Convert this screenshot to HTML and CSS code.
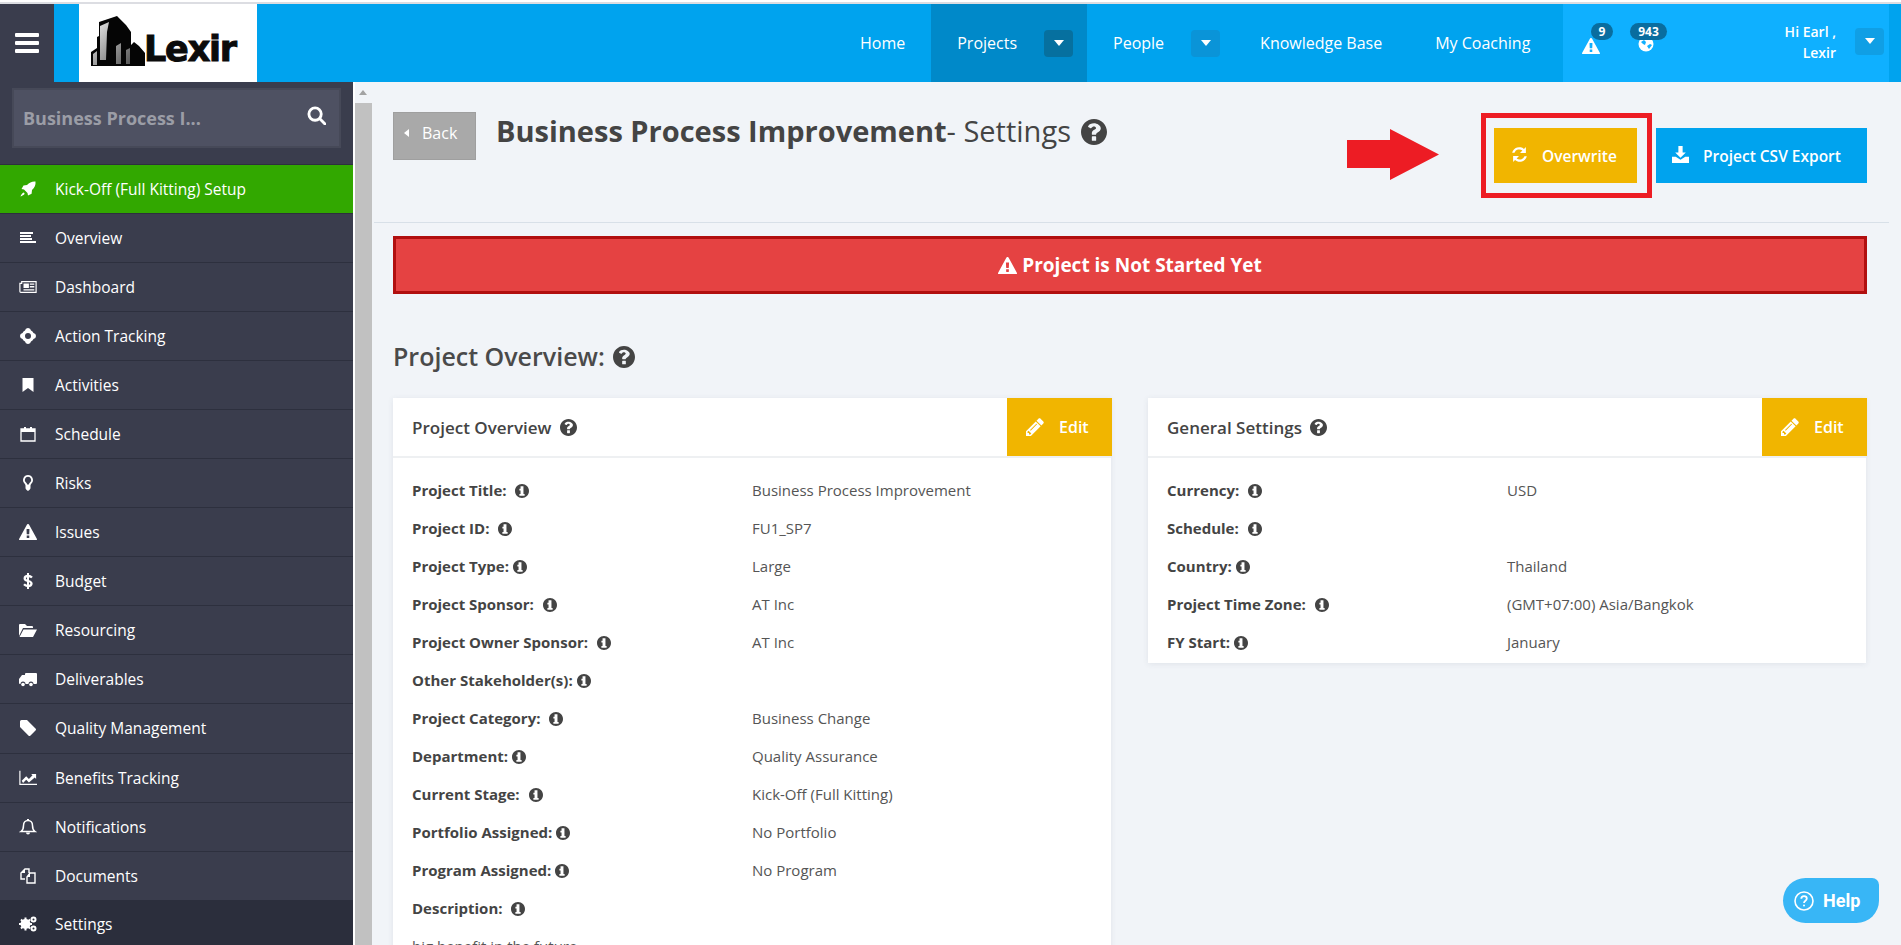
FILE: index.html
```html
<!DOCTYPE html>
<html lang="en">
<head>
<meta charset="utf-8">
<title>Business Process Improvement - Settings</title>
<link rel="stylesheet" href="styles.css">
</head>
<body>
<svg class="defs" width="0" height="0" aria-hidden="true">
  <defs>
    <symbol id="i-q" viewBox="0 0 1536 1536"><path d="M768 0C344 0 0 344 0 768s344 768 768 768 768-344 768-768S1192 0 768 0zm128 1248c0 18-14 32-32 32H672c-18 0-32-14-32-32v-192c0-18 14-32 32-32h192c18 0 32 14 32 32v192zm243-600c-20 56-75 103-135 138-57 34-92 64-108 94v16c0 18-14 32-32 32H672c-18 0-32-14-32-32v-64c0-84 72-148 148-192 66-38 100-66 100-108 0-56-62-96-124-96-70 0-104 32-158 100-11 14-31 17-45 6L429 468c-14-10-17-29-8-43C494 309 598 256 768 256c178 0 400 138 400 288 0 36-10 70-29 104z"/></symbol>
    <symbol id="i-i" viewBox="0 0 1536 1536"><path d="M768 0C344 0 0 344 0 768s344 768 768 768 768-344 768-768S1192 0 768 0zm-128 256h256c18 0 32 14 32 32v192c0 18-14 32-32 32H640c-18 0-32-14-32-32V288c0-18 14-32 32-32zm384 1024H512c-18 0-32-14-32-32v-128c0-18 14-32 32-32h96V704h-96c-18 0-32-14-32-32V544c0-18 14-32 32-32h384c18 0 32 14 32 32v544h96c18 0 32 14 32 32v128c0 18-14 32-32 32z"/></symbol>
    <symbol id="i-pencil" viewBox="0 0 1536 1536"><path d="M363 1408l91-91-235-235-91 91v107h128v128h107zM886 480L344 1022l58 58L944 538zM832 288l416 416-832 832H0v-416L832 288zm683 96c0 34-12 63-37 90l-166 166-416-416L1062 58c25-26 55-37 90-37s64 12 90 37l235 234c25 27 38 57 38 92z"/></symbol>
    <symbol id="i-warn" viewBox="0 0 1792 1600"><path d="M1024 1375v-190c0-9-3-17-9-23s-14-10-23-10H800c-9 0-17 4-23 10s-9 14-9 23v190c0 9 3 17 9 23s14 10 23 10h192c9 0 17-4 23-10s9-14 9-23zm-2-374l18-459c0-8-3-14-10-19-9-7-17-11-25-11H785c-8 0-16 4-25 11-7 5-10 12-10 21l17 457c0 7 3 12 10 17s15 7 24 7h185c9 0 17-2 23-7s10-10 11-17zM1008 67l768 1408c23 42 23 84-2 126-11 19-27 35-47 46s-41 17-63 17H128c-22 0-43-6-63-17s-36-27-47-46c-25-42-25-84-2-126L784 67c11-21 27-37 47-49s42-18 65-18 44 6 65 18 36 28 47 49z"/></symbol>
  </defs>
</svg>

<div class="app">
  <div class="topline"></div>
  <header class="topbar">
    <button class="burger" aria-label="Menu"><span></span><span></span><span></span></button>
    <div class="brandband">
      <a class="logo">
        <svg class="logo-mark" viewBox="0 0 56 56" width="56" height="56" aria-hidden="true">
          <defs>
            <linearGradient id="lg" x1="0" y1="0" x2="1" y2="1"><stop offset="0" stop-color="#eee"/><stop offset="1" stop-color="#555"/></linearGradient>
          </defs>
          <path fill="#050505" d="M0 50V36l6-4V21l2-1V6L26 0l9 9 5 7v13l3-3 5 4 6 7v13z"/>
          <path fill="url(#lg)" d="M9 44V10l9-4-2 10-1 28zM2 49V38l4-3v14zM25 48V30l5-3v21zM35 48V34l4-2v16z"/>
        </svg>
        <span class="logo-text">Lexir</span>
      </a>
    </div>
    <nav class="mainnav">
      <a class="navlink">Home</a>
      <div class="navitem active"><a class="navlink">Projects</a><span class="caretbtn dark"><i class="caret"></i></span></div>
      <div class="navitem"><a class="navlink">People</a><span class="caretbtn"><i class="caret"></i></span></div>
      <a class="navlink kb">Knowledge Base</a>
      <a class="navlink coach">My Coaching</a>
    </nav>
    <div class="userzone">
      <div class="alert">
        <svg class="alert-ic" viewBox="0 0 1792 1600"><use href="#i-warn"/></svg>
        <span class="badge b-one">9</span>
      </div>
      <div class="alert globe">
        <svg class="globe-ic" viewBox="0 0 16 16"><circle cx="8" cy="8" r="7.5" fill="#fff"/><path fill="#0fb0ff" d="M3 6l3-2 2 2-1 3-2-1zM9 10l3-2 2 1-3 4z"/></svg>
        <span class="badge b-two">943</span>
      </div>
      <div class="hello"><span>Hi Earl ,</span><span>Lexir</span></div>
      <span class="caretbtn user"><i class="caret"></i></span>
    </div>
  </header>

  <div class="body">
    <aside class="sidebar">
      <div class="searchwrap">
        <div class="search">
          <span class="search-text">Business Process I...</span>
          <svg class="search-ic" viewBox="0 0 20 20" fill="none" stroke="#fff" stroke-width="3"><circle cx="8.5" cy="8.5" r="6.5"/><path d="M13.5 13.5L19 19" stroke-linecap="round"/></svg>
        </div>
      </div>
      <ul class="menu">
        <li class="kick"><svg viewBox="0 0 16 16" class="mi"><path fill="#fff" d="M15.5.5c.4 3.5-1 6.5-3.5 8.5l-.4 3.700L8 14.500 7.500 12 4 8.500 1.500 8l2-3.600L7 4C9.500 1.500 12 .2 15.500.5zM3.500 11.500c1 .2 1.200 1.200 1 1.600C4 14 2 15 .5 15.500c.5-1.500 1.500-3.500 3-4z"/></svg><span>Kick-Off (Full Kitting) Setup</span></li>
        <li><svg viewBox="0 0 16 16" class="mi"><path fill="#fff" d="M0 2h13v2H0zM0 5h11v2H0zM0 8h12v2H0zM0 11h16v2H0z"/></svg><span>Overview</span></li>
        <li><svg viewBox="0 0 20 16" class="mi"><path fill="none" stroke="#fff" stroke-width="1.300" d="M3 2h16v12H2a1 1 0 0 1-1-1V4h2z"/><path fill="#fff" d="M5 4h6v5H5zM12 4h5v1.500h-5zM12 7h5v1.500h-5zM5 10.500h12V12H5z"/></svg><span>Dashboard</span></li>
        <li><svg viewBox="0 0 16 16" class="mi"><path fill="#fff" fill-rule="evenodd" d="M8 0a3 3 0 0 1 3 2.500A5 5 0 0 1 13.500 5 3 3 0 0 1 16 8a3 3 0 0 1-2.500 3A5 5 0 0 1 11 13.500 3 3 0 0 1 8 16a3 3 0 0 1-3-2.500A5 5 0 0 1 2.500 11 3 3 0 0 1 0 8a3 3 0 0 1 2.500-3A5 5 0 0 1 5 2.500 3 3 0 0 1 8 0zM8 5a3 3 0 1 0 0 6 3 3 0 0 0 0-6z"/></svg><span>Action Tracking</span></li>
        <li><svg viewBox="0 0 16 16" class="mi"><path fill="#fff" d="M2.500 1h11v14L8 11l-5.500 4z"/></svg><span>Activities</span></li>
        <li><svg viewBox="0 0 16 16" class="mi"><path fill="none" stroke="#fff" stroke-width="1.300" d="M1 3h14v12H1z"/><path fill="#fff" d="M1 3h14v3H1zM4 1h2v3H4zM10 1h2v3h-2z"/></svg><span>Schedule</span></li>
        <li><svg viewBox="0 0 16 16" class="mi"><path fill="#fff" fill-rule="evenodd" d="M8 0a5 5 0 0 1 3.500 8.500c-.8.900-1 1.500-1 2.500v2c0 1-1 2-2.500 3-1.500-1-2.500-2-2.500-3v-2c0-1-.2-1.600-1-2.500A5 5 0 0 1 8 0zm0 1.800a3.200 3.200 0 0 0-2 5.700c.8.800 1 1.500 1.200 2h1.600c.2-.5.4-1.200 1.200-2a3.200 3.200 0 0 0-2-5.700z"/></svg><span>Risks</span></li>
        <li><svg viewBox="0 0 1792 1600" class="mi"><use href="#i-warn" fill="#fff"/></svg><span>Issues</span></li>
        <li><svg viewBox="0 0 16 16" class="mi"><path fill="none" stroke="#fff" stroke-width="2.300" d="M12 4.500C11 3.500 9.500 3 8 3 6 3 4.700 4 4.700 5.500 4.700 9 11.500 7 11.500 10.500 11.500 12 10 13 8 13c-1.600 0-3-.6-4-1.700"/><path fill="#fff" d="M7 0h2v16H7z"/></svg><span>Budget</span></li>
        <li><svg viewBox="0 0 18 16" class="mi"><path fill="#fff" d="M0 14V3a1 1 0 0 1 1-1h5l2 2h5a1 1 0 0 1 1 1v1H4L0 14zM4.500 7.500H18L14 15H.5z"/></svg><span>Resourcing</span></li>
        <li><svg viewBox="0 0 18 16" class="mi"><path fill="#fff" d="M7 2h10a1 1 0 0 1 1 1v9a1 1 0 0 1-1 1h-2.500a2.500 2.500 0 0 0-5 0H6.500a2.500 2.500 0 0 0-5 0H1a1 1 0 0 1-1-1V8l3-4h3V3a1 1 0 0 1 1-1z"/><circle cx="4" cy="13.500" r="1.800" fill="#fff"/><circle cx="12" cy="13.500" r="1.800" fill="#fff"/></svg><span>Deliverables</span></li>
        <li><svg viewBox="0 0 16 16" class="mi"><path fill="#fff" d="M0 1.500A1.500 1.500 0 0 1 1.500 0H7l8.500 8.500a1.500 1.500 0 0 1 0 2.100l-5 5a1.500 1.500 0 0 1-2.100 0L0 7z"/></svg><span>Quality Management</span></li>
        <li><svg viewBox="0 0 20 16" class="mi"><path fill="none" stroke="#fff" stroke-width="1.300" d="M1 0v15h19"/><path fill="#fff" d="M3 11l5-5 3 3 4-4-1.500-1.500H19v5.500L17.500 7.500 11 13 8 10l-3.500 3.500z"/></svg><span>Benefits Tracking</span></li>
        <li><svg viewBox="0 0 16 16" class="mi"><path fill="none" stroke="#fff" stroke-width="1.500" d="M1 12.500c1.500-1 2.500-3 2.500-6C3.500 3.500 5.500 1.500 8 1.500s4.500 2 4.500 5c0 3 1 5 2.500 6z"/><path fill="#fff" d="M6 13.500h4a2 2 0 0 1-4 0zM7 0h2v2H7z"/></svg><span>Notifications</span></li>
        <li><svg viewBox="0 0 16 16" class="mi"><path fill="none" stroke="#fff" stroke-width="1.400" d="M5 11H1V5l4-4h4v4M7 15V9l3-4h5v10z"/><path fill="#fff" d="M1 5h4V1zM7 9h3V5z"/></svg><span>Documents</span></li>
        <li class="current"><svg viewBox="0 0 18 16" class="mi"><circle cx="6.500" cy="8" r="3.500" fill="none" stroke="#fff" stroke-width="3"/><path stroke="#fff" stroke-width="2" d="M6.500 1.500v13M0 8h13M2 3.500l9 9M11 3.500l-9 9"/><circle cx="14.500" cy="3.500" r="2" fill="none" stroke="#fff" stroke-width="2"/><circle cx="14.500" cy="12.500" r="2" fill="none" stroke="#fff" stroke-width="2"/></svg><span>Settings</span></li>
      </ul>
    </aside>

    <div class="sidescroll"><i class="sc-up"></i><i class="sc-thumb"></i></div>

    <main class="content">
      <div class="pagehead">
        <a class="backbtn"><i class="back-caret"></i>Back</a>
        <h1 class="title"><b>Business Process Improvement</b>- Settings <svg class="ic-q"><use href="#i-q"/></svg></h1>
        <div class="actions">
          <a class="btn amber"><svg viewBox="0 0 16 16" class="btn-ic"><path fill="#fff" d="M14 1v5.500H8.500L10.700 4.300A4.700 4.700 0 0 0 3.300 6.300H1.100A6.800 6.800 0 0 1 12.200 2.800zM2 15V9.500h5.500L5.300 11.700a4.700 4.700 0 0 0 7.400-2h2.200A6.800 6.800 0 0 1 3.800 13.200z"/></svg>Overwrite</a>
          <a class="btn blue"><svg viewBox="0 0 16 16" class="btn-ic"><path fill="#fff" d="M6 0h4v6h3L8 11 3 6h3zM0 10h3.500L8 13l4.500-3H16v6H0z"/></svg>Project CSV Export</a>
        </div>
      </div>
      <div class="notice"><svg class="notice-ic" viewBox="0 0 1792 1600"><use href="#i-warn"/></svg> Project is Not Started Yet</div>

      <h2 class="section">Project Overview: <svg class="ic-q sm"><use href="#i-q"/></svg></h2>

      <div class="cards">
        <section class="card">
          <div class="cardhead"><span class="cardtitle">Project Overview <svg class="ic-q xs"><use href="#i-q"/></svg></span><a class="edit"><svg class="edit-ic"><use href="#i-pencil"/></svg>Edit</a></div>
          <div class="cardbody">
            <div class="row"><span class="lab">Project Title: <svg class="ii"><use href="#i-i"/></svg></span><span class="val">Business Process Improvement</span></div>
            <div class="row"><span class="lab">Project ID: <svg class="ii"><use href="#i-i"/></svg></span><span class="val">FU1_SP7</span></div>
            <div class="row"><span class="lab tight">Project Type:<svg class="ii"><use href="#i-i"/></svg></span><span class="val">Large</span></div>
            <div class="row"><span class="lab">Project Sponsor: <svg class="ii"><use href="#i-i"/></svg></span><span class="val">AT Inc</span></div>
            <div class="row"><span class="lab">Project Owner Sponsor: <svg class="ii"><use href="#i-i"/></svg></span><span class="val">AT Inc</span></div>
            <div class="row"><span class="lab tight">Other Stakeholder(s):<svg class="ii"><use href="#i-i"/></svg></span><span class="val"></span></div>
            <div class="row"><span class="lab">Project Category: <svg class="ii"><use href="#i-i"/></svg></span><span class="val">Business Change</span></div>
            <div class="row"><span class="lab tight">Department:<svg class="ii"><use href="#i-i"/></svg></span><span class="val">Quality Assurance</span></div>
            <div class="row"><span class="lab">Current Stage: <svg class="ii"><use href="#i-i"/></svg></span><span class="val">Kick-Off (Full Kitting)</span></div>
            <div class="row"><span class="lab tight">Portfolio Assigned:<svg class="ii"><use href="#i-i"/></svg></span><span class="val">No Portfolio</span></div>
            <div class="row"><span class="lab tight">Program Assigned:<svg class="ii"><use href="#i-i"/></svg></span><span class="val">No Program</span></div>
            <div class="row"><span class="lab">Description: <svg class="ii"><use href="#i-i"/></svg></span><span class="val"></span></div>
            <div class="row"><span class="val">big benefit in the future</span></div>
          </div>
        </section>
        <section class="card short">
          <div class="cardhead"><span class="cardtitle">General Settings <svg class="ic-q xs"><use href="#i-q"/></svg></span><a class="edit"><svg class="edit-ic"><use href="#i-pencil"/></svg>Edit</a></div>
          <div class="cardbody">
            <div class="row"><span class="lab">Currency: <svg class="ii"><use href="#i-i"/></svg></span><span class="val">USD</span></div>
            <div class="row"><span class="lab">Schedule: <svg class="ii"><use href="#i-i"/></svg></span><span class="val"></span></div>
            <div class="row"><span class="lab tight">Country:<svg class="ii"><use href="#i-i"/></svg></span><span class="val">Thailand</span></div>
            <div class="row"><span class="lab">Project Time Zone: <svg class="ii"><use href="#i-i"/></svg></span><span class="val">(GMT+07:00) Asia/Bangkok</span></div>
            <div class="row"><span class="lab tight">FY Start:<svg class="ii"><use href="#i-i"/></svg></span><span class="val">January</span></div>
          </div>
        </section>
      </div>
    </main>
    <div class="pagescroll"></div>
  </div>

  <div class="markbox"></div>
  <svg class="markarrow" viewBox="0 0 92 51" width="92" height="51" aria-hidden="true"><path fill="#ed1c24" d="M0 11h43V0l49 25.500L43 51V39H0z"/></svg>
  <a class="help"><svg viewBox="0 0 20 20" class="help-ic" fill="none" stroke="#fff" stroke-width="1.600"><circle cx="10" cy="10" r="9"/><path stroke-width="1.800" d="M7.300 7.800C7.300 6 8.500 5.200 10 5.200s2.800.9 2.800 2.400c0 2.200-2.800 2.100-2.800 4.400"/><circle cx="10" cy="14.500" r="1" fill="#fff" stroke="none"/></svg>Help</a>
</div>
</body>
</html>
```

FILE: styles.css
```css
* { box-sizing: border-box; }
html, body { margin: 0; height: 100%; overflow: hidden; }
body { font-family: "Open Sans", "Liberation Sans", sans-serif; color: #444; background: #f1f4f8; font-size: 15px; }
a { text-decoration: none; color: inherit; }
ul { list-style: none; margin: 0; padding: 0; }
.defs { position: absolute; }
.app { position: relative; width: 1901px; height: 945px; overflow: hidden; display: flex; flex-direction: column; }

.topline { height: 4px; flex: none; background: #fff; border-bottom: 2px solid #dcdde2; }
.topbar { height: 78px; flex: none; display: flex; background: #00a3ee; }
.burger { width: 54px; flex: none; border: 0; background: #3a3d4d; padding: 0; display: flex; flex-direction: column; justify-content: center; align-items: center; gap: 4px; }
.burger span { display: block; width: 24px; height: 4px; border-radius: 1px; background: #fff; }
.brandband { width: 203px; flex: none; padding-left: 25px; display: flex; }
.logo { width: 178px; height: 78px; background: #fff; display: flex; align-items: center; padding: 9px 0 0 12px; }
.logo-mark { flex: none; margin-top: -8px; }
.logo-text { font-family: "DejaVu Sans", sans-serif; font-weight: 700; font-size: 35px; color: #0b0b0b; letter-spacing: -1.200px; -webkit-text-stroke: 1px #0b0b0b; margin-left: -3px; margin-top: 2px; }

.mainnav { flex: 1; display: flex; align-items: stretch; padding-left: 603px; }
.navlink { color: #fff; font-size: 16px; line-height: 78px; display: block; }
.mainnav > .navlink { margin-right: 26px; }
.navitem { display: flex; align-items: center; padding: 0 14px 0 26px; gap: 27px; }
.navitem.active { background: #0089c9; }
.mainnav > .kb { margin-left: 26px; margin-right: 53px; }
.mainnav > .coach { margin-right: 0; }
.caretbtn { width: 29px; height: 27px; border-radius: 4px; background: #0a94d8; display: flex; align-items: center; justify-content: center; }
.caretbtn.dark { background: #06709f; }
.caret { display: block; border-left: 5px solid transparent; border-right: 5px solid transparent; border-top: 6px solid #fff; }

.userzone { width: 326px; flex: none; margin-right: 12px; background: #0fb0ff; position: relative; display: flex; align-items: center; justify-content: flex-end; padding-right: 5px; }
.alert { position: absolute; top: 0; }
.alert { left: 19px; }
.alert.globe { left: 75px; }
.alert-ic { position: absolute; top: 34px; left: 0; width: 18px; height: 16px; fill: #fff; }
.globe-ic { position: absolute; top: 32px; left: 0; width: 16px; height: 16px; }
.badge { position: absolute; top: 19px; height: 17px; border-radius: 9px; background: #096d9f; color: #fff; font-size: 12px; font-weight: 700; line-height: 17px; text-align: center; }
.b-one { left: 9px; width: 22px; }
.b-two { left: -8px; width: 37px; }
.hello { display: flex; flex-direction: column; align-items: flex-end; color: #fff; font-size: 14px; font-weight: 600; line-height: 21px; margin-right: 19px; margin-top: -2px; }
.caretbtn.user { background: #109fe5; margin-top: -4px; }

.body { flex: 1; min-height: 0; display: flex; }
.sidebar { width: 353px; flex: none; background: #3a3d4d; }
.searchwrap { padding: 6px 12px 16px; }
.search { height: 60px; background: #4e5162; border: 2px solid #464958; display: flex; align-items: center; justify-content: space-between; padding: 0 13px 0 9px; }
.search-text { color: #9b9da6; font-weight: 700; font-size: 18px; }
.search-ic { width: 19px; height: 19px; margin-top: -6px; }
.menu li { height: 49.100px; display: flex; align-items: center; color: #fff; font-size: 15.500px; padding-left: 19px; border-top: 1px solid #2d303e; }
.menu li span { margin-left: 0; }
.menu .kick { background: #32a800; height: 48.500px; }
.menu .current { background: #2b2e3c; border-top: 0; }
.mi { width: 18px; height: 16px; margin-right: 18px; flex: none; }

.sidescroll { width: 19px; flex: none; background: #f1f4f8; padding-left: 2px; display: flex; flex-direction: column; border-left: 2px solid #fff; padding-left: 0; }
.sc-up { height: 21px; flex: none; position: relative; }
.sc-up::before { content: ""; position: absolute; left: 4px; top: 8px; border-left: 4.500px solid transparent; border-right: 4.500px solid transparent; border-bottom: 5px solid #a3a3a3; }
.sc-thumb { flex: 1; background: #c1c1c1; }

.content { flex: 1; min-width: 0; padding-left: 2px; }
.pagehead { height: 141px; border-bottom: 1px solid #d8e0e8; position: relative; padding: 30px 0 0 19px; display: flex; align-items: flex-start; }
.backbtn { width: 83px; height: 48px; background: #a9a9a9; border: 1px solid #9f9f9f; color: #fff; font-size: 16px; display: flex; align-items: center; padding: 0 0 6px 10px; flex: none; }
.back-caret { display: block; border-top: 4.500px solid transparent; border-bottom: 4.500px solid transparent; border-right: 5px solid #fff; margin-right: 13px; }
.title { margin: 0 0 0 20px; font-size: 29px; font-weight: 400; line-height: 38px; color: #444; white-space: nowrap; }
.title b { font-weight: 700; }
.ic-q { width: 26px; height: 26px; fill: #444; vertical-align: -3px; margin-left: 2px; }
.ic-q.sm { width: 22px; height: 22px; vertical-align: -2px; }
.ic-q.xs { width: 17px; height: 17px; vertical-align: -2px; margin-left: 4px; }
.actions { margin-left: auto; margin-right: 22px; display: flex; gap: 19px; margin-top: 16px; }
.btn { height: 55px; display: flex; align-items: center; color: #fff; font-weight: 600; font-size: 15.500px; }
.btn.amber { width: 143px; background: #f1b500; padding-left: 17px; }
.btn.blue { width: 211px; background: #00a3ee; padding-left: 16px; }
.btn-ic { width: 17px; height: 17px; margin-right: 14px; flex: none; margin-top: -2px; }

.notice { margin: 13px 22px 0 19px; height: 58px; background: #e54242; border: 3px solid #b10f0f; color: #fff; font-weight: 700; font-size: 19px; display: flex; align-items: center; justify-content: center; gap: 5px; }
.notice-ic { width: 19px; height: 17px; fill: #fff; }
.section { margin: 42px 0 0 19px; font-size: 25px; font-weight: 600; line-height: 40px; color: #4a4a4a; }
.cards { margin: 22px 22px 0 19px; display: grid; grid-template-columns: 718px 718px; column-gap: 37px; align-items: start; }
.card { background: #fff; box-shadow: 0 1px 6px rgba(60, 70, 90, .09); }
.cardhead { height: 60px; border-bottom: 2px solid #eef0f2; display: flex; justify-content: space-between; align-items: flex-start; }
.cardtitle { font-size: 17px; font-weight: 600; color: #444; padding-left: 19px; line-height: 60px; }
.edit { width: 105px; height: 58px; background: #f1b500; color: #fff; font-weight: 600; font-size: 16px; display: flex; align-items: center; padding-left: 19px; margin-right: -1px; }
.edit-ic { width: 18px; height: 18px; fill: #fff; margin-right: 15px; }
.cardbody { padding: 13px 19px 2px; }
.row { height: 38px; display: flex; align-items: center; font-size: 15px; }
.lab { width: 340px; flex: none; font-weight: 700; color: #444; white-space: nowrap; }
.lab .ii { margin-left: 5px; }
.lab.tight .ii { margin-left: 4px; }
.ii { width: 14px; height: 14px; fill: #444; vertical-align: -2px; }
.val { color: #555; white-space: nowrap; }

.pagescroll { width: 12px; flex: none; }
.markbox { position: absolute; left: 1481px; top: 113px; width: 171px; height: 85px; border: 5px solid #ed1c24; pointer-events: none; }
.markarrow { position: absolute; left: 1347px; top: 129px; }
.help { position: absolute; left: 1783px; top: 878px; width: 96px; height: 45px; background: #38b6f6; border-radius: 23px 7px 23px 23px; color: #fff; font-family: Roboto, sans-serif; font-weight: 700; font-size: 18px; display: flex; align-items: center; padding-left: 11px; gap: 9px; }
.help-ic { width: 20px; height: 20px; flex: none; }
```
